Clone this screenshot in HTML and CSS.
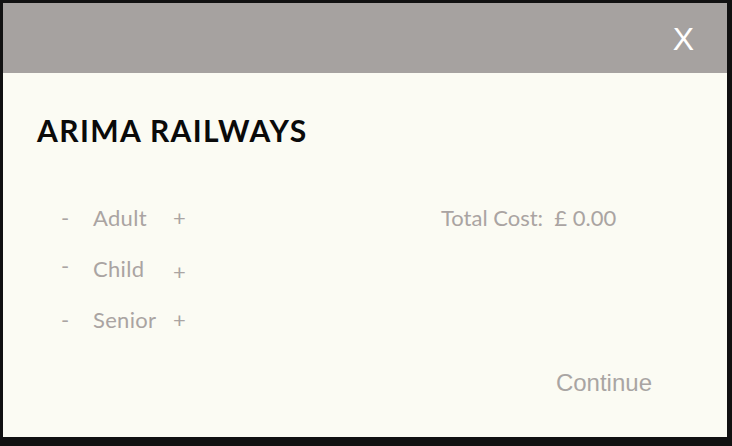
FILE: index.html
```html
<!DOCTYPE html>
<html>
<head>
<meta charset="utf-8">
<link rel="stylesheet" href="styles.css">
</head>
<body>
<div class="modal">
  <div class="header"><span class="close">X</span></div>
  <div class="content">
    <h1 class="title">ARIMA RAILWAYS</h1>
    <div class="main">
      <div class="tickets">
        <div class="row"><span class="minus">-</span><span class="label">Adult</span><span class="plus">+</span></div>
        <div class="row row-child"><span class="minus">-</span><span class="label">Child</span><span class="plus">+</span></div>
        <div class="row"><span class="minus">-</span><span class="label">Senior</span><span class="plus">+</span></div>
      </div>
      <div class="total">Total Cost:&nbsp; £ 0.00</div>
    </div>
    <div class="footer"><span class="continue">Continue</span></div>
  </div>
</div>
</body>
</html>
```
FILE: styles.css
```css
html, body { margin: 0; padding: 0; }
body { background: #111111; width: 732px; height: 446px; overflow: hidden; }
.modal {
  margin: 3px;
  width: 724px;
  height: 434px;
  background: #fbfbf3;
  display: flex;
  flex-direction: column;
}
.header {
  height: 70px;
  background: #a6a2a0;
  display: flex;
  justify-content: flex-end;
  align-items: center;
  padding-right: 33px;
}
.close {
  color: #ffffff;
  font-family: "Liberation Sans", Arial, sans-serif;
  font-size: 32px;
  line-height: 1;
  margin-top: 2px;
}
.content {
  flex: 1;
  display: flex;
  flex-direction: column;
  padding: 37px 0 0 34px;
  font-family: "Lato", sans-serif;
  color: #aaa4a2;
}
.title {
  margin: 0;
  font-family: "Lato", sans-serif;
  font-weight: 700;
  font-size: 30px;
  letter-spacing: 1.4px;
  color: #0a0a0a;
  line-height: 40px;
}
.main {
  display: flex;
  margin-top: 50px;
}
.tickets {
  width: 404px;
  display: flex;
  flex-direction: column;
  gap: 15px;
}
.row {
  display: flex;
  align-items: baseline;
  font-size: 22px;
  letter-spacing: 0.3px;
  line-height: 36px;
}
.minus { width: 32px; padding-left: 24px; }
.label { width: 80px; }
.row-child .minus { position: relative; top: -3px; }
.row-child .plus { position: relative; top: 3px; }
.total { font-size: 22px; letter-spacing: 0; line-height: 36px; }
.footer {
  margin-top: 31px;
  display: flex;
  justify-content: flex-end;
  padding-right: 75px;
}
.continue {
  font-family: "Liberation Sans", Arial, sans-serif;
  font-size: 24px;
  color: #a9a5a3;
}
```
